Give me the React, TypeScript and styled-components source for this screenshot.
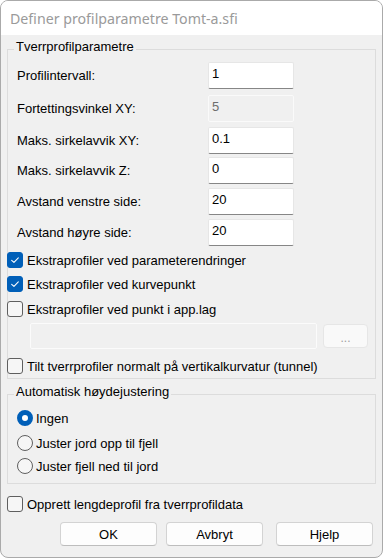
import styled, { createGlobalStyle } from 'styled-components'

const GlobalStyle = createGlobalStyle`
  html, body {
    margin: 0;
    padding: 0;
    background: #fff;
  }
  body {
    font-family: "Liberation Sans", Arial, sans-serif;
    font-size: 13px;
    color: #000;
  }
`;

function Check({ checked }: { checked: boolean }) {
  return (
    <CheckBox $checked={checked}>
      {checked && (
        <svg width="16" height="16" viewBox="0 0 16 16">
          <path d="M4.2 8.3 L6.8 10.8 L11.8 5.6" fill="none" stroke="#fff" strokeWidth="1.2" strokeLinecap="round" strokeLinejoin="round" />
        </svg>
      )}
    </CheckBox>
  )
}

export default function App() {
  return (
    <>
      <GlobalStyle />
      <Window>
        <TitleBar>Definer profilparametre Tomt-a.sfi</TitleBar>
        <Body>
          <Group $mt={4} $pb={2}>
            <Legend>Tverrprofilparametre</Legend>
            <FieldRow $mt={2}>
              <Label>Profilintervall:</Label>
              <TextBox defaultValue="1" />
            </FieldRow>
            <FieldRow $mt={6}>
              <Label>Fortettingsvinkel XY:</Label>
              <TextBox defaultValue="5" disabled />
            </FieldRow>
            <FieldRow $mt={5}>
              <Label>Maks. sirkelavvik XY:</Label>
              <TextBox defaultValue="0.1" />
            </FieldRow>
            <FieldRow $mt={3}>
              <Label>Maks. sirkelavvik Z:</Label>
              <TextBox defaultValue="0" />
            </FieldRow>
            <FieldRow $mt={4}>
              <Label>Avstand venstre side:</Label>
              <TextBox defaultValue="20" />
            </FieldRow>
            <FieldRow $mt={4}>
              <Label>Avstand høyre side:</Label>
              <TextBox defaultValue="20" />
            </FieldRow>
            <CheckRow $mt={4}>
              <Check checked />
              Ekstraprofiler ved parameterendringer
            </CheckRow>
            <CheckRow $mt={4}>
              <Check checked />
              Ekstraprofiler ved kurvepunkt
            </CheckRow>
            <CheckRow $mt={5}>
              <Check checked={false} />
              Ekstraprofiler ved punkt i app.lag
            </CheckRow>
            <FileRow>
              <PathBox disabled defaultValue="" />
              <BrowseButton disabled>...</BrowseButton>
            </FileRow>
            <CheckRow $mt={7}>
              <Check checked={false} />
              Tilt tverrprofiler normalt på vertikalkurvatur (tunnel)
            </CheckRow>
          </Group>

          <Group $mt={5} $pb={7}>
            <Legend>Automatisk høydejustering</Legend>
            <RadioRow $mt={3}>
              <Radio $checked />
              Ingen
            </RadioRow>
            <RadioRow $mt={5}>
              <Radio $checked={false} />
              Juster jord opp til fjell
            </RadioRow>
            <RadioRow $mt={3}>
              <Radio $checked={false} />
              Juster fjell ned til jord
            </RadioRow>
          </Group>

          <CheckRow $mt={10} $outside>
            <Check checked={false} />
            Opprett lengdeprofil fra tverrprofildata
          </CheckRow>

          <Buttons>
            <Button>OK</Button>
            <Button $ml={9}>Avbryt</Button>
            <Button $ml={13}>Hjelp</Button>
          </Buttons>
        </Body>
      </Window>
    </>
  )
}

const Window = styled.div`
  width: 383px;
  height: 558px;
  box-sizing: border-box;
  border: 1px solid #aaaaaa;
  border-radius: 8px;
  overflow: hidden;
  background: #f0f0f0;
  display: flex;
  flex-direction: column;
`;

const TitleBar = styled.div`
  height: 34px;
  flex: none;
  background: #fff;
  display: flex;
  align-items: center;
  padding-left: 9px;
  font-family: "Noto Sans", "Open Sans", sans-serif;
  font-size: 14.2px;
  color: #9a9a9a;
`;

const Body = styled.div`
  flex: 1;
  display: flex;
  flex-direction: column;
`;

const Group = styled.fieldset<{ $mt: number; $pb: number }>`
  margin: ${p => p.$mt}px 6px 0;
  padding: 0 0 ${p => p.$pb}px;
  min-width: 0;
  border: 1px solid #dcdcdc;
  display: flex;
  flex-direction: column;
`;

const Legend = styled.legend`
  margin-left: 6px;
  padding: 0 2px 5px;
  line-height: 16px;
  height: 21px;
  box-sizing: border-box;
`;

const FieldRow = styled.div<{ $mt: number }>`
  margin-top: ${p => p.$mt}px;
  height: 27px;
  padding-left: 9px;
  display: flex;
  align-items: center;
`;

const Label = styled.span`
  width: 191px;
  flex: none;
`;

const TextBox = styled.input`
  width: 86px;
  height: 27px;
  box-sizing: border-box;
  margin: 0;
  padding: 2px 3px 7px;
  border: 1px solid #e6e6e6;
  border-bottom-color: #868686;
  border-radius: 2px;
  background: #fff;
  font-family: inherit;
  font-size: 13px;
  color: #000;
  outline: none;

  &:disabled {
    background: #f0f0f0;
    border-color: #fafafa;
    color: #6d6d6d;
  }
`;

const CheckRow = styled.label<{ $mt: number; $outside?: boolean }>`
  margin: ${p => p.$mt}px 0 0 ${p => (p.$outside ? 6 : -1)}px;
  height: 20px;
  display: flex;
  align-items: center;
  gap: 4px;
  white-space: nowrap;
`;

const CheckBox = styled.span<{ $checked: boolean }>`
  width: 16px;
  height: 16px;
  box-sizing: border-box;
  flex: none;
  border-radius: 3px;
  border: 1px solid ${p => (p.$checked ? '#005fb8' : '#5f5f5f')};
  background: ${p => (p.$checked ? '#005fb8' : '#f6f6f6')};
  display: flex;
  align-items: center;
  justify-content: center;

  svg {
    display: block;
  }
`;

const FileRow = styled.div`
  margin-top: 4px;
  height: 26px;
  display: flex;
  align-items: center;
`;

const PathBox = styled.input`
  margin: 0 0 0 22px;
  width: 287px;
  height: 26px;
  box-sizing: border-box;
  padding: 0 3px;
  border: 1px solid #fbfbfb;
  border-radius: 2px;
  background: #f0f0f0;
  outline: none;
`;

const BrowseButton = styled.button`
  margin-left: 6px;
  width: 45px;
  height: 24px;
  box-sizing: border-box;
  padding: 3px 0 0;
  border: 1px solid #e6e6e6;
  border-radius: 4px;
  background: #f9f9f9;
  font-family: inherit;
  font-size: 12px;
  color: #a0a0a0;
`;

const RadioRow = styled.label<{ $mt: number }>`
  margin-top: ${p => p.$mt}px;
  padding-left: 9px;
  height: 20px;
  display: flex;
  align-items: center;
  gap: 3px;
`;

const Radio = styled.span<{ $checked: boolean }>`
  width: 16px;
  height: 16px;
  box-sizing: border-box;
  flex: none;
  border-radius: 50%;
  border: ${p => (p.$checked ? '5px solid #005fb8' : '1px solid #5f5f5f')};
  background: ${p => (p.$checked ? '#fff' : '#f6f6f6')};
`;

const Buttons = styled.div`
  margin-top: 8px;
  padding-left: 59px;
  display: flex;
`;

const Button = styled.button<{ $ml?: number }>`
  margin-left: ${p => p.$ml ?? 0}px;
  width: 97px;
  height: 24px;
  box-sizing: border-box;
  padding: 0;
  border: 1px solid #d3d3d3;
  border-bottom-color: #bdbdbd;
  border-radius: 4px;
  background: #fdfdfd;
  font-family: inherit;
  font-size: 13px;
  color: #000;
`;
